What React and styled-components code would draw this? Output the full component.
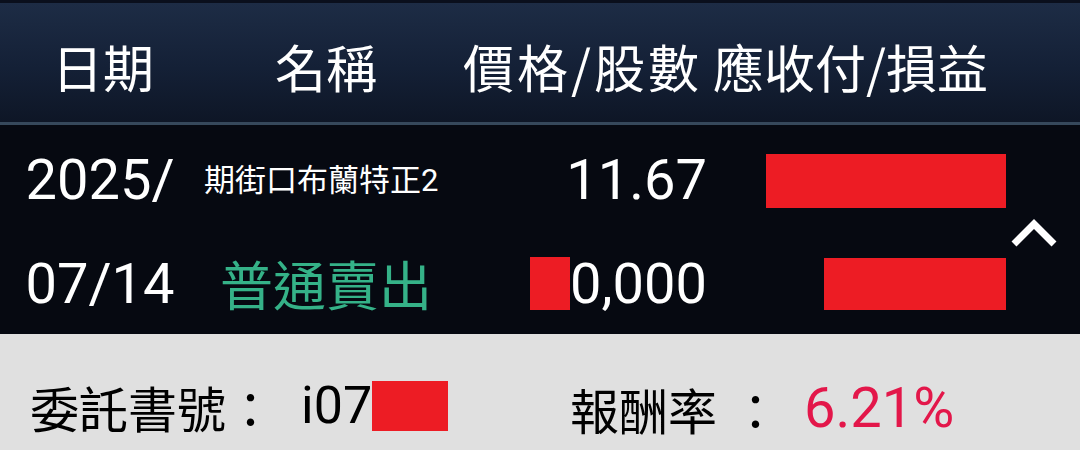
import React from "react";
import styled, { createGlobalStyle } from "styled-components";

const Global = createGlobalStyle`
  html, body { margin: 0; padding: 0; }
  body {
    width: 1080px;
    height: 450px;
    overflow: hidden;
    background: #e0e0e0;
    font-family: Roboto, "Noto Sans CJK TC", "Noto Sans", sans-serif;
  }
`;

const COLS = "200px 255px 252px 299px 1fr";

const Screen = styled.div`
  width: 1080px;
  height: 450px;
  display: flex;
  flex-direction: column;
`;

const Header = styled.div`
  display: grid;
  grid-template-columns: ${COLS};
  align-items: center;
  height: 125px;
  box-sizing: border-box;
  border-top: 3px solid #0a0f1c;
  border-bottom: 3px solid #36485b;
  background: linear-gradient(180deg, #1d2c45 0%, #142036 55%, #0e1626 100%);
  color: #ffffff;
  font-family: "Noto Sans CJK TC", sans-serif;
  font-size: 51px;
  line-height: 1;
  padding-top: 8px;
`;

const HeadCell = styled.div`
  padding-left: ${(p) => p.$pl || 0}px;
  letter-spacing: ${(p) => p.$ls || 0}px;
  white-space: nowrap;
`;

const Body = styled.div`
  display: grid;
  grid-template-columns: ${COLS};
  grid-template-rows: 106px 103px;
  background: #060911;
  color: #ffffff;
`;

const Cell = styled.div`
  display: flex;
  align-items: center;
  justify-content: ${(p) => p.$justify || "center"};
  white-space: nowrap;
  padding-top: ${(p) => p.$pt || 0}px;
`;

const Big = styled.span`
  font-size: 56px;
  line-height: 1;
`;

const Name = styled.span`
  font-family: Roboto, "Noto Sans CJK TC", sans-serif;
  font-size: 31px;
  line-height: 1;
  margin-left: 4px;
`;

const Action = styled.span`
  font-family: "Noto Sans CJK TC", sans-serif;
  font-size: 53px;
  line-height: 1;
  color: #35b288;
  margin-left: 20px;
`;

const Mask = styled.span`
  display: inline-block;
  width: ${(p) => p.$w}px;
  height: ${(p) => p.$h}px;
  background: #ed1c24;
`;

const Chevron = styled.div`
  grid-column: 5;
  grid-row: 1 / span 2;
  display: flex;
  align-items: center;
  padding-left: 3px;
  padding-top: 4px;
`;

const Footer = styled.div`
  flex: 1;
  display: grid;
  grid-template-columns: 540px 540px;
  align-items: start;
  padding-top: 46px;
  background: #e0e0e0;
  color: #000;
`;

const Info = styled.div`
  display: flex;
  align-items: center;
  padding-left: 30px;
  white-space: nowrap;
`;

const Label = styled.span`
  font-family: "Noto Sans CJK TC", sans-serif;
  font-size: 49px;
  line-height: 1;
  word-spacing: ${(p) => p.$ws || 0}px;
`;

const Value = styled.span`
  display: flex;
  align-items: center;
  margin-left: ${(p) => p.$ml}px;
  font-size: ${(p) => p.$size}px;
  line-height: 1;
  color: ${(p) => p.$color || "#000"};
`;

export default function App() {
  return (
    <Screen>
      <Global />
      <Header>
        <HeadCell $pl={52}>日期</HeadCell>
        <HeadCell $pl={75}>名稱</HeadCell>
        <HeadCell $pl={8} $ls={3}>價格/股數</HeadCell>
        <HeadCell $pl={6}>應收付/損益</HeadCell>
        <HeadCell />
      </Header>
      <Body>
        <Cell $pt={4}><Big>2025/</Big></Cell>
        <Cell $justify="flex-start" $pt={4}><Name>期街口布蘭特正2</Name></Cell>
        <Cell $justify="flex-end" $pt={4}><Big>11.67</Big></Cell>
        <Cell $justify="flex-end" $pt={6}><Mask $w={240} $h={54} /></Cell>
        <Chevron>
          <svg width="50" height="34" viewBox="0 0 50 34">
            <polyline points="5,29 25,9 45,29" fill="none" stroke="#ffffff" strokeWidth="7" strokeLinecap="butt" strokeLinejoin="miter" />
          </svg>
        </Chevron>
        <Cell $pt={2}><Big>07/14</Big></Cell>
        <Cell $justify="flex-start" $pt={2}><Action>普通賣出</Action></Cell>
        <Cell $justify="flex-end" $pt={2}><Mask $w={40} $h={53} /><Big>0,000</Big></Cell>
        <Cell $justify="flex-end" $pt={2}><Mask $w={182} $h={52} /></Cell>
      </Body>
      <Footer>
        <Info>
          <Label>委託書號：</Label>
          <Value $ml={26} $size={52}>i07<Mask $w={76} $h={50} /></Value>
        </Info>
        <Info>
          <Label $ws={3}>報酬率 ：</Label>
          <Value $ml={24} $size={56} $color="#e3174a">6.21%</Value>
        </Info>
      </Footer>
    </Screen>
  );
}
